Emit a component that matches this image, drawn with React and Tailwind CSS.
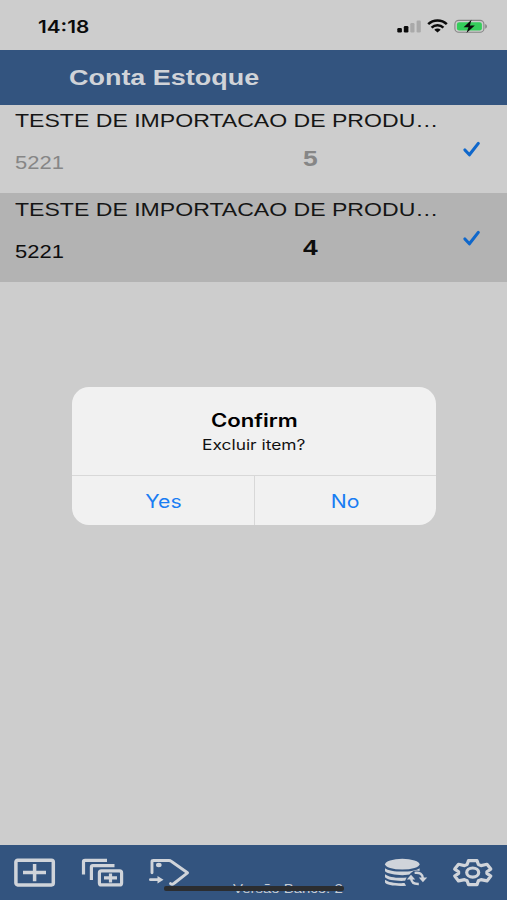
import React from "react";

const helv = "font-['Liberation_Sans',Arial,sans-serif]";
const inter = "font-['Inter',sans-serif]";

function StatusBar() {
  return (
    <header className="flex h-[50px] shrink-0 items-start justify-between bg-[#cdcdcd] pl-[38px] pr-[19px]">
      <span className={`${inter} mt-[15px] origin-left scale-x-[1.22] text-[17px] leading-[24px] font-semibold text-[#0a0a0a]`}>14:18</span>
      <div className="mt-[18px] flex h-4 items-center">
        <svg width="25" height="16" viewBox="0 0 25 16">
          <rect x="0.3" y="10" width="4.6" height="4.5" rx="1.2" fill="#0a0a0a" />
          <rect x="6.8" y="8" width="4.6" height="6.5" rx="1.2" fill="#0a0a0a" />
          <rect x="13.3" y="5" width="4.2" height="9.5" rx="1.2" fill="#a9a9a9" />
          <rect x="19.6" y="2.5" width="4.2" height="12" rx="1.2" fill="#a9a9a9" />
        </svg>
        <svg className="ml-[5px]" width="21" height="16" viewBox="0 0 21 16" fill="none" stroke="#0a0a0a" strokeWidth="2.5">
          <path d="M1.2 6.2C6.3 1.2 14.7 1.2 19.8 6.2" />
          <path d="M4.6 9.6C7.8 6.5 13.2 6.5 16.4 9.6" />
          <path d="M7.3 11.8C9 10.2 12 10.2 13.7 11.8L10.5 14.6Z" fill="#0a0a0a" stroke="none" />
        </svg>
        <svg className="ml-[6px]" width="34" height="16" viewBox="0 0 34 16">
          <rect x="0.9" y="2.4" width="29" height="11.8" rx="3.8" fill="none" stroke="#858585" strokeWidth="1.1" />
          <rect x="2.9" y="4.2" width="25" height="8.2" rx="2.2" fill="#35cd5b" />
          <path d="M31.2 6v4.8c2.3-1 2.3-3.8 0-4.8Z" fill="#858585" />
          <path d="M17.5 1.8L9.6 9.2h4.9l-2 5.8 8.3-7.6h-4.9Z" fill="#0a0a0a" />
        </svg>
      </div>
    </header>
  );
}

function Item({ count, selected }) {
  return (
    <li className={`flex ${selected ? "h-[89px] bg-[#b3b3b3] pt-px text-[#0d0d0d]" : "h-[88px] bg-[#cdcdcd] text-[#868686]"}`}>
      <div className="flex w-[452px] flex-col pl-[14.5px]">
        <span className={`${helv} mt-[4px] origin-left scale-x-[1.214] self-start text-[19px] leading-[24px] whitespace-nowrap text-[#151515]`}>
          TESTE DE IMPORTACAO DE PRODU…
        </span>
        <div className="flex">
          <span className={`${helv} mt-[18px] w-[288.5px] text-[18px] leading-[24px]`}>
            <span className="inline-block origin-left scale-x-[1.22]">5221</span>
          </span>
          <span className={`${helv} mt-[14px] origin-left scale-x-[1.2] self-start text-[22px] leading-[24px] font-bold`}>{count}</span>
        </div>
      </div>
      <svg className="mt-[35px] ml-[10px]" width="20" height="20" viewBox="0 0 20 20" fill="none" stroke="#0f67cb" strokeWidth="3.1" strokeLinecap="round" strokeLinejoin="round">
        <path d="M2.9 10L7.4 14.8L16.3 3.4" />
      </svg>
    </li>
  );
}

function Alert() {
  return (
    <div className={`${inter} absolute top-[387px] left-[72px] flex h-[138px] w-[364px] flex-col overflow-hidden rounded-[17px] bg-[#f1f1f1]`}>
      <div className="flex h-[89px] flex-col items-center border-b border-[#d8d8d8] pt-[22px]">
        <h2 className="scale-x-[1.23] text-[18px] leading-[24px] font-semibold text-black">Confirm</h2>
        <p className="scale-x-[1.24] text-[14px] leading-[24px] text-[#111]">Excluir item?</p>
      </div>
      <div className="flex flex-1 text-[18px] text-[#1a7df3]">
        <button className="flex flex-1 items-center justify-center border-r border-[#d8d8d8] pt-px pl-px">
          <span className="scale-x-[1.18]">Yes</span>
        </button>
        <button className="flex flex-1 items-center justify-center pt-px">
          <span className="scale-x-[1.18]">No</span>
        </button>
      </div>
    </div>
  );
}

function Toolbar() {
  return (
    <footer className="relative flex h-[55px] shrink-0 items-start bg-[#33547f] pt-[13px] pl-[14px]">
      <svg width="42" height="30" viewBox="0 0 42 30" fill="none" stroke="#d0d4da" strokeWidth="3.5">
        <rect x="1.9" y="2.3" width="37.4" height="24.6" rx="1.8" />
        <path d="M9 14.6h23M20.6 6v17.2" />
      </svg>
      <svg className="ml-[25px]" width="43" height="30" viewBox="0 0 43 30" fill="none" stroke="#d0d4da" strokeWidth="3.2" strokeLinejoin="round">
        <path d="M2.5 16.5V3.5Q2.5 2.3 4 2.3H26" />
        <path d="M10.4 22V9Q10.4 7.6 11.9 7.6H33.5" />
        <rect x="18.4" y="12.9" width="22.2" height="14" rx="2" />
        <path d="M23 19.9h13M29.5 15.4v9" />
      </svg>
      <svg className="ml-[24px]" width="44" height="30" viewBox="0 0 44 30" fill="none" stroke="#d0d4da" strokeWidth="2.9" strokeLinecap="round" strokeLinejoin="round">
        <path d="M4 14.7V3.5Q4 2.5 5.4 2.5H21Q22.3 2.5 23.5 3.5L39.5 14.8L26.5 25Q24.5 27.2 22.5 25.6" />
        <ellipse cx="10.8" cy="7" rx="2.8" ry="2.2" fill="#d0d4da" stroke="none" />
        <path d="M2.4 21.7h8" strokeWidth="2.8" />
        <path d="M9.5 18l6 3.7-6 3.8Z" fill="#d0d4da" stroke="none" />
      </svg>
      <svg className="ml-[192px]" width="44" height="30" viewBox="0 0 44 30">
        <g fill="#d0d4da">
          <ellipse cx="18.3" cy="6.2" rx="17.2" ry="5.4" />
          <path d="M1 10.2c5 4.5 29.6 4.5 34.6 0v3.1c-5.5 5.1-29.1 5.1-34.6 0Z" />
          <path d="M1 16.2c3.6 3 12 4.1 21.7 3.4l-1.6 3.2C11.6 23.2 3.2 22 1 19.3Z" />
          <path d="M1 21.7c3.5 2.7 10.3 3.7 19.5 3.4l1.6 2.6C12.5 28.4 2.2 27.3 1 24.5Z" />
        </g>
        <ellipse cx="32.8" cy="20.4" rx="8.6" ry="7.8" fill="#33547f" />
        <g stroke="#d0d4da" strokeWidth="2.4" fill="none">
          <path d="M27.2 20.5Q27.4 26.2 34.8 26" />
          <path d="M30.6 14.9Q38.5 14 38.9 20.5" />
        </g>
        <g fill="#d0d4da">
          <path d="M22.8 21.4L27 16.8L31.2 21.4Z" />
          <path d="M34.8 19.6L38.9 24.2L43.2 19.6Z" />
        </g>
      </svg>
      <svg className="ml-[24px]" width="42" height="30" viewBox="0 0 42 30" fill="none" stroke="#d0d4da" strokeWidth="3.2" strokeLinejoin="round">
        <path d="M16.5 2.6H25L26.4 6.5L29 7.6L35 6.3L38.8 11.1L34.9 13.8V15.4L38.8 18.1L35 22.9L29 21.6L26.4 22.7L25 26.6H16.5L15.1 22.7L12.5 21.6L6.5 22.9L2.7 18.1L6.6 15.4V13.8L2.7 11.1L6.5 6.3L12.5 7.6L15.1 6.5Z" />
        <ellipse cx="20.7" cy="14.6" rx="6" ry="4.6" />
      </svg>
      <span className={`${helv} absolute top-[36px] left-[233px] origin-left scale-x-[1.15] text-[13px] leading-[16px] whitespace-nowrap text-[#c6ccd4]`}>Versão Banco: 2</span>
      <div className="absolute top-[41px] left-[164px] h-[5px] w-[180px] rounded-[2px] bg-[#2b2d30]" />
    </footer>
  );
}

export default function App() {
  return (
    <div className="relative flex h-[900px] w-[507px] flex-col overflow-hidden bg-[#cdcdcd]">
      <StatusBar />
      <div className="flex h-[55px] shrink-0 items-center bg-[#33547f] pl-[68.5px]">
        <h1 className={`${helv} origin-left scale-x-[1.225] text-[22px] leading-[28px] font-bold whitespace-nowrap text-[#d0d3d8]`}>Conta Estoque</h1>
      </div>
      <ul className="flex-1">
        <Item count="5" />
        <Item count="4" selected />
      </ul>
      <Toolbar />
      <Alert />
    </div>
  );
}
